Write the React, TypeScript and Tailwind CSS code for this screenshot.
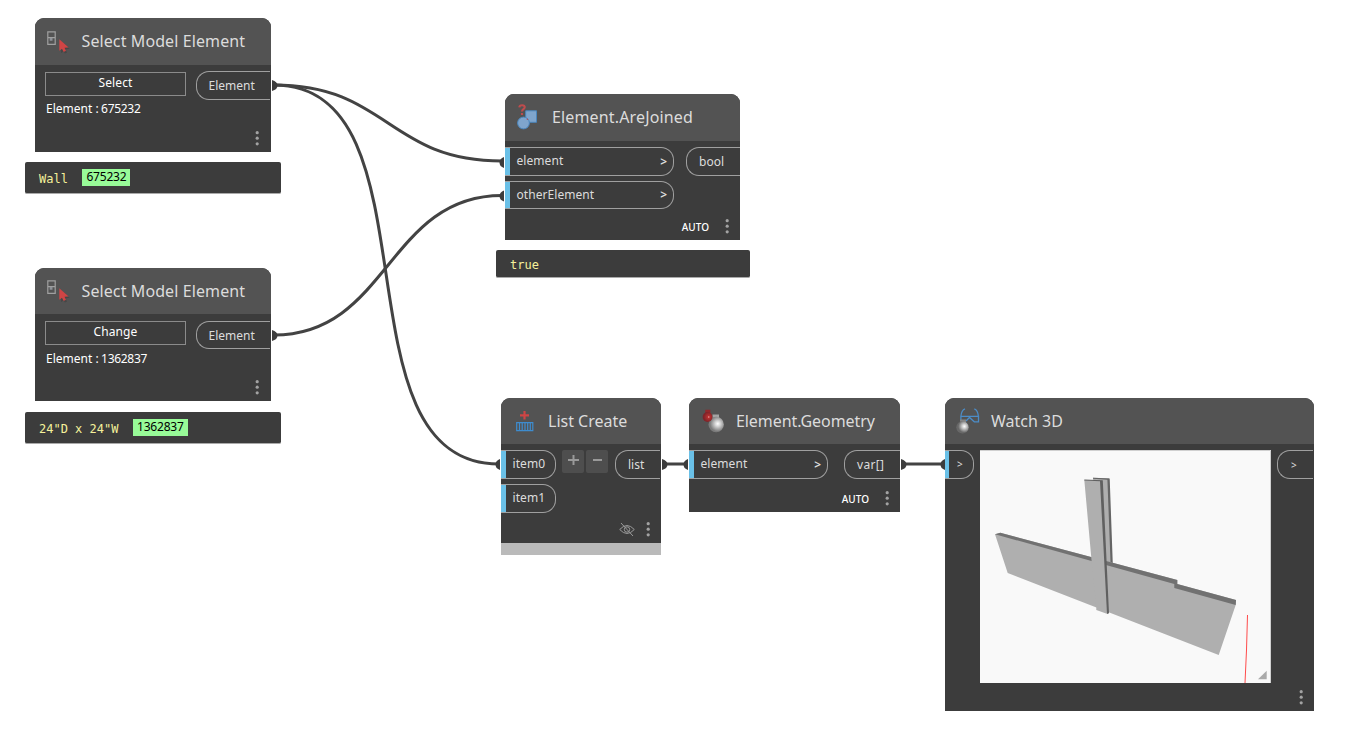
import type { ReactNode } from "react";

const FONT = "font-['Noto_Sans',sans-serif]";

function Node({ place, header, icon, title, titleClass, children }: {
  place: string; header: string; icon: ReactNode; title: string; titleClass: string; children: ReactNode;
}) {
  return (
    <section className={`absolute flex flex-col overflow-hidden rounded-t-[9px] bg-[#3c3c3c] text-[#dcdcdc] ${place}`}>
      <header className={`flex shrink-0 items-center bg-[#535353] ${header}`}>
        {icon}
        <h2 className={`whitespace-nowrap text-[16px] leading-none ${titleClass}`}>{title}</h2>
      </header>
      {children}
    </section>
  );
}

function Dots({ className = "" }: { className?: string }) {
  return (
    <svg className={`h-[15px] w-1 shrink-0 fill-[#a3a3a3] ${className}`} viewBox="0 0 4 15">
      <circle cx="2.2" cy="1.7" r="1.6" /><circle cx="2.2" cy="7.2" r="1.6" /><circle cx="2.2" cy="12.8" r="1.6" />
    </svg>
  );
}

function InPort({ label, arrow, className }: { label: string; arrow?: boolean; className: string }) {
  return (
    <div className={`flex shrink-0 items-center rounded-r-[13px] border border-l-0 border-[#a0a0a0] text-[12px] leading-none ${className}`}>
      <span className="w-[5px] shrink-0 self-stretch bg-[#6ac0e7]" />
      <span className="ml-[6.5px] flex-1 whitespace-nowrap pb-px tracking-[0.06px]">{label}</span>
      {arrow && <span className="mr-[6px] font-semibold">&gt;</span>}
    </div>
  );
}

function OutPort({ label, className }: { label: string; className: string }) {
  return (
    <div className={`flex shrink-0 items-center whitespace-nowrap rounded-l-[13px] border border-r-0 border-[#a0a0a0] leading-none ${className}`}>
      {label}
    </div>
  );
}

function SelectIcon() {
  return (
    <svg className="ml-3 size-6 shrink-0" viewBox="0 0 24 24">
      <path d="M.8 1.8h7.400v12.500H.8zM.8 7.700h7.400" fill="none" stroke="#a0a0a0" strokeWidth="1.200" />
      <path d="M2.700 8h2.800v2.800H2.700z" fill="#8e9298" />
      <path d="M14 11v12l2.500-1.500 1.500 2 2-1-1.500-3 4-1z" fill="#393939" opacity=".5" />
      <path d="M12.300 9.200v11.500l2.700-2 1.700 3.300 2.300-1.200-1.500-3 4.200-.3z" fill="#cf4545" />
    </svg>
  );
}

function JoinedIcon() {
  return (
    <svg className="ml-3 h-[27px] w-[22px] shrink-0" viewBox="0 0 22 27">
      <path d="M8.700 6.800h10.800v11.500H8.700z" fill="#7fa5cc" stroke="#4a86bd" />
      <circle cx="6.500" cy="19" r="5.900" fill="#7fa5cc" stroke="#4a86bd" />
      <path d="M2.300 3.400c.3-3 6-2.800 5.400.2-.4 1.700-2.700 1.600-2.700 4M5 9v2" fill="none" stroke="#bd4c4d" strokeWidth="2.100" />
      <circle cx="10.400" cy="15.200" r=".7" fill="#bd4c4d" />
    </svg>
  );
}

function ListIcon() {
  return (
    <svg className="ml-[15px] h-[21px] w-[18px] shrink-0" viewBox="0 0 18 21">
      <path d="M8.500 0v8.500M4 4.300h9" stroke="#cf4545" strokeWidth="2.200" />
      <path d="M.7 11.700h16.100v8H.7zM3.500 12v7.500M6.200 12v7.500M9 12v7.500M11.700 12v7.500M14.300 12v7.500" fill="none" stroke="#3e8cce" strokeWidth="1.200" />
    </svg>
  );
}

function GeometryIcon() {
  return (
    <svg className="ml-[13px] h-6 w-[22px] shrink-0" viewBox="0 0 22 24">
      <defs>
        <radialGradient id="redBall" cx=".62" cy=".5"><stop stopColor="#eda8a8" /><stop offset=".25" stopColor="#b93030" /><stop offset="1" stopColor="#7e2429" /></radialGradient>
        <radialGradient id="grayBall" cx=".6" cy=".45"><stop stopColor="#fff" /><stop offset=".35" stopColor="#d4d4d4" /><stop offset="1" stopColor="#7b7b7b" /></radialGradient>
      </defs>
      <path d="M10.500 5.500h6.500v4h-6.500z" fill="#a4a4a4" />
      <circle cx="14.200" cy="15.500" r="7.700" fill="url(#grayBall)" />
      <path d="M3.300.7h5v4h-5z" fill="#94272b" />
      <circle cx="5.500" cy="8" r="4.900" fill="url(#redBall)" />
    </svg>
  );
}

function WatchIcon() {
  return (
    <svg className="ml-[11px] h-[27px] w-6 shrink-0" viewBox="0 0 24 27">
      <defs><radialGradient id="watchBall" cx=".65" cy=".42"><stop stopColor="#fff" /><stop offset=".3" stopColor="#d6d6d6" /><stop offset="1" stopColor="#686868" /></radialGradient></defs>
      <path d="M9 .8Q5.500 2 4.900 8.300H22.500V13.800H18.300L13.500 9.500 10 13M18.300.8Q21.800 2 22.400 8.300M4.900 8.300V12" fill="none" stroke="#4c8cc6" strokeWidth="1.300" />
      <path d="M4 11.500h6v4H4z" fill="#858585" />
      <circle cx="6.500" cy="19.300" r="6.200" fill="url(#watchBall)" />
    </svg>
  );
}

function SelectNode({ place, header, action, value, second }: { place: string; header: string; action: string; value: string; second?: boolean }) {
  return (
    <Node place={place} header={header} icon={<SelectIcon />} title="Select Model Element" titleClass={`ml-[10.5px] tracking-[0.1px] ${second ? "" : "pb-[2px]"}`}>
      <div className={`flex flex-1 ${second ? "pt-[7px]" : "pt-[6px]"}`}>
        <div className={`ml-[10px] w-[141px] text-[12px] leading-none text-white ${second ? "" : "pt-px"}`}>
          <button className="flex h-6 w-full items-center justify-center border border-[#8b8b8b] pb-[2px] tracking-[0.1px]">{action}</button>
          <p className={`ml-px flex gap-[2.5px] whitespace-pre ${second ? "mt-2" : "mt-[7px]"}`}>
            <span>Element :</span><span className="tracking-[-0.3px]">{value}</span>
          </p>
        </div>
        <div className="ml-[10px] flex flex-1 flex-col items-end">
          <OutPort label="Element" className={`mr-px w-[74px] pl-[11.500px] text-[12px] ${second ? "h-7 pt-px" : "h-[29px]"}`} />
          <Dots className="mr-3 mt-auto mb-[6px]" />
        </div>
      </div>
    </Node>
  );
}

function Preview({ place, text, id }: { place: string; text: string; id?: string }) {
  return (
    <div className={`absolute flex items-center rounded-[2px] border-b border-[#aaa] bg-[#3c3c3c] pl-[14px] ${place}`}>
      <span className="whitespace-pre pt-[3px] font-['DejaVu_Sans_Mono',monospace] text-[12px] leading-none text-[#f5f19b]">{text}</span>
      {id && <span className="ml-[14.500px] flex h-[17px] items-center bg-[#98fb98] px-1 pb-[2px] text-[12px] leading-none tracking-[-0.200px] text-black">{id}</span>}
    </div>
  );
}

function Wires() {
  const ends: [number, number, number][] = [[272, 85.5, 1], [272, 335.5, 1], [504, 162.5, 0], [504, 196, 0], [500, 464.5, 0], [662, 464.5, 1], [688, 464.5, 0], [901, 464.5, 1], [945, 464.5, 0]];
  return (
    <svg className="absolute left-0 top-0 h-[756px] w-[1358px]" viewBox="0 0 1358 756">
      <g fill="none" stroke="#434343" strokeWidth="3">
        <path d="M274 85C388 85 388 161 502 161" />
        <path d="M274 85C442 85 330 464 499 464" />
        <path d="M274 335C388 335 388 195.500 502 195.500" />
        <path d="M664 464H688M902 464H944" />
      </g>
      <g fill="#3c3c3c">
        {ends.map(([x, y, out]) => <path key={`${x}-${y}`} d={out ? `M${x} ${y - 5.5}Q${x + 5.5} ${y - 4} ${x + 5.5} ${y}T${x} ${y + 5.5}z` : `M${x} ${y - 5.5}Q${x - 4.5} ${y - 4} ${x - 4.5} ${y}T${x} ${y + 5.5}z`} />)}
      </g>
    </svg>
  );
}

function Scene() {
  return (
    <svg className="h-[233px] w-[291px] shrink-0 bg-[#f9f9f9]" viewBox="980 450 291 233">
      <path d="M980 450.500h290.500V683" fill="none" stroke="#d0d0d0" />
      <path d="M1093 477.700 1109 478.300 1112 563 1100 562z" fill="#aeaeae" />
      <path d="M1093 477.700 1109.700 478.500 1112.800 564H1110.600L1107.400 479.700 1093 478.700z" fill="#656565" />
      <path d="M995 534.300 1000.300 532.700 1177.300 580V584L1236 600 1235.700 605 1218.700 655 1007.700 573z" fill="#afafaf" />
      <path d="M995 534.300 1000.300 532.700 1177.300 580V584L1236 600 1235.700 605 1174.300 588V584z" fill="#717171" />
      <path d="M1084.300 480 1101.500 480.700 1107.500 614 1096.300 610V607L1091.600 561z" fill="#afafaf" />
      <path d="M1084.300 479.500 1102.800 480.300 1109 613.300 1107 614 1100 481.300 1084.300 480.500z" fill="#606060" />
      <path d="m1247.500 615-1 35-1.500 33" fill="none" stroke="#ff4b4b" />
      <path d="M1258 679.300h8.700v-8.500z" fill="#aaa" />
    </svg>
  );
}

export default function App() {
  return (
    <main className={`relative h-[756px] w-[1358px] overflow-hidden bg-white ${FONT}`}>
      <Wires />
      <SelectNode place="left-[35px] top-[18px] h-[134px] w-[236px]" header="h-[47px]" action="Select" value="675232" />
      <Preview place="left-[25px] top-[162px] h-[32px] w-[256px]" text="Wall" id="675232" />
      <SelectNode place="left-[35px] top-[268px] h-[133px] w-[236px]" header="h-[46px]" action="Change" value="1362837" second />
      <Preview place="left-[25px] top-[412px] h-[32px] w-[256px]" text={'24"D x 24"W'} id="1362837" />

      <Node place="left-[505px] top-[94px] h-[146px] w-[235px]" header="h-[47px]" icon={<JoinedIcon />} title="Element.AreJoined" titleClass="ml-[13px] pb-[2px] tracking-[0.150px]">
        <div className="flex justify-between pt-[6px]">
          <div className="flex flex-col gap-[5px]">
            <InPort label="element" arrow className="h-[29px] w-[169px]" />
            <InPort label="otherElement" arrow className="h-7 w-[169px]" />
          </div>
          <OutPort label="bool" className="h-[29px] w-[54px] pl-3 text-[12px]" />
        </div>
        <div className="mt-auto mb-[6px] flex items-center justify-end pr-[11px] text-[10px] font-medium leading-none"><span className="text-white">AUTO</span><Dots className="ml-4" /></div>
      </Node>
      <Preview place="left-[496px] top-[250px] h-[28px] w-[254px]" text="true" />

      <Node place="left-[501px] top-[398px] h-[157px] w-[160px]" header="h-[46px]" icon={<ListIcon />} title="List Create" titleClass="ml-[14px]">
        <div className="flex items-start pt-[6px]">
          <div className="flex flex-col gap-[5px]"><InPort label="item0" className="h-[29px] w-[55px]" /><InPort label="item1" className="h-[29px] w-[55px]" /></div>
          <div className="ml-[6px] flex gap-[2px] text-[#999]">
            {[true, false].map((plus) => <button key={String(plus)} className="flex h-[23px] w-[22px] items-center justify-center rounded-[2px] bg-[#4e4e4e] pb-[2px]"><svg className="size-[11px]" viewBox="0 0 11 11"><path d={plus ? "M0 5h11M5.500 0v10" : "M1 5h9"} stroke="currentColor" strokeWidth="2" /></svg></button>)}
          </div>
          <OutPort label="list" className="ml-[7px] h-[29px] w-[45px] pl-3 text-[12px]" />
        </div>
        <div className="mt-auto mb-[6px] flex items-center justify-end pr-[11px]">
          <svg className="h-[15px] w-4" viewBox="0 0 16 15" fill="none" stroke="#999"><path d="M.7 7.500Q8-.5 15.300 7.500 8 15.500.7 7.500ZM2 1l12 13" /><circle cx="8" cy="7.500" r="2.700" /></svg>
          <Dots className="ml-[11px]" />
        </div>
        <div className="h-3 shrink-0 bg-[#bababa]" />
      </Node>

      <Node place="left-[689px] top-[398px] h-[114px] w-[211px]" header="h-[46px]" icon={<GeometryIcon />} title="Element.Geometry" titleClass="ml-3 tracking-[-0.080px]">
        <div className="flex justify-between pt-[6px]"><InPort label="element" arrow className="h-[29px] w-[139px]" /><OutPort label="var[]" className="h-[29px] w-14 pl-3 text-[12px] tracking-[0.300px]" /></div>
        <div className="mt-auto mb-[6px] flex items-center justify-end pr-[11px] text-[10px] font-medium leading-none"><span className="text-white">AUTO</span><Dots className="ml-4" /></div>
      </Node>

      <Node place="left-[945px] top-[398px] h-[313px] w-[369px]" header="h-[46px]" icon={<WatchIcon />} title="Watch 3D" titleClass="ml-[11px]">
        <div className="flex items-start pt-[6px]">
          <div className="flex h-[29px] w-[29px] items-center rounded-r-[13px] border border-l-0 border-[#a0a0a0] text-[10px]"><span className="w-1 self-stretch bg-[#6ac0e7]" /><span className="ml-[8px] pb-px">&gt;</span></div>
          <div className="ml-[6px] flex"><Scene /></div>
          <OutPort label=">" className="ml-[6px] h-[29px] w-9 pl-[13px] text-[10px]" />
        </div>
        <div className="mt-auto mb-[6px] flex justify-end pr-[11px]"><Dots /></div>
      </Node>
    </main>
  );
}
